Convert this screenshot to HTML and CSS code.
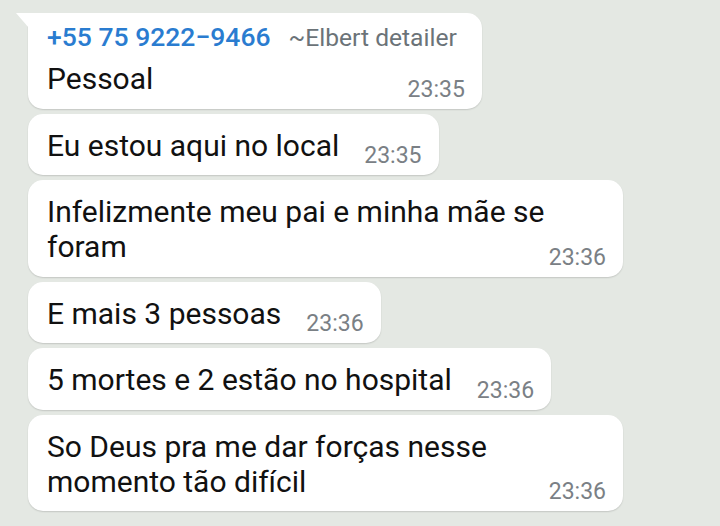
FILE: index.html
```html
<!DOCTYPE html>
<html lang="pt-BR">
<head>
    <meta charset="UTF-8">
    <meta name="viewport" content="width=device-width, initial-scale=1.0">
    <title>Conversa</title>
    <link rel="stylesheet" href="styles.css">
</head>
<body>

    <div class="chat">
        <div class="bubble first">
            <div class="sender">
                <span class="phone">+55 75 9222&minus;9466</span>
                <span class="pushname">~Elbert detailer</span>
            </div>
            <div class="text">Pessoal<span class="time">23:35</span></div>
        </div>

        <div class="bubble">
            <div class="text">Eu estou aqui no local<span class="time">23:35</span></div>
        </div>

        <div class="bubble">
            <div class="text">Infelizmente meu pai e minha mãe se foram<span class="time">23:36</span></div>
        </div>

        <div class="bubble">
            <div class="text">E mais 3 pessoas<span class="time">23:36</span></div>
        </div>

        <div class="bubble">
            <div class="text">5 mortes e 2 estão no hospital<span class="time">23:36</span></div>
        </div>

        <div class="bubble">
            <div class="text">So Deus pra me dar forças nesse momento tão difícil<span class="time">23:36</span></div>
        </div>
    </div>

</body>
</html>
```

FILE: styles.css
```css
* {
    margin: 0;
    padding: 0;
    box-sizing: border-box;
    font-family: Roboto, 'Noto Sans', sans-serif;
}

body {
    background: #e4e8e3;
    min-height: 100vh;
    overflow: hidden;
}

.chat {
    display: flex;
    flex-direction: column;
    align-items: flex-start;
    gap: 5px;
    padding: 13px 0 0 28px;
}

.bubble {
    position: relative;
    display: flow-root;
    max-width: 595px;
    background: #fff;
    border-radius: 15px;
    padding: 14px 17px 8px 19px;
    box-shadow: 0 1px 1.5px rgba(0, 0, 0, 0.14);
}

.bubble.first {
    border-top-left-radius: 0;
}

/* little tail on the first message of a group */
.bubble.first::before {
    content: "";
    position: absolute;
    left: -12px;
    top: 0;
    width: 13px;
    height: 15px;
    background: #fff;
    clip-path: polygon(0 0, 100% 0, 100% 100%);
}

.sender {
    display: flex;
    align-items: baseline;
    gap: 18px;
    padding-right: 8px;
    margin-top: -1px;
    margin-bottom: 12px;
    line-height: 22px;
    white-space: nowrap;
}

.phone {
    color: #2a7cd0;
    font-size: 26.5px;
    font-weight: 500;
}

.pushname {
    color: #6b7378;
    font-size: 24.6px;
}

.text {
    color: #111;
    font-size: 30px;
    line-height: 35px;
}

.time {
    float: right;
    margin: 17.5px 0 0 25px;
    color: #7a8085;
    font-size: 23px;
    line-height: 22px;
}
```
